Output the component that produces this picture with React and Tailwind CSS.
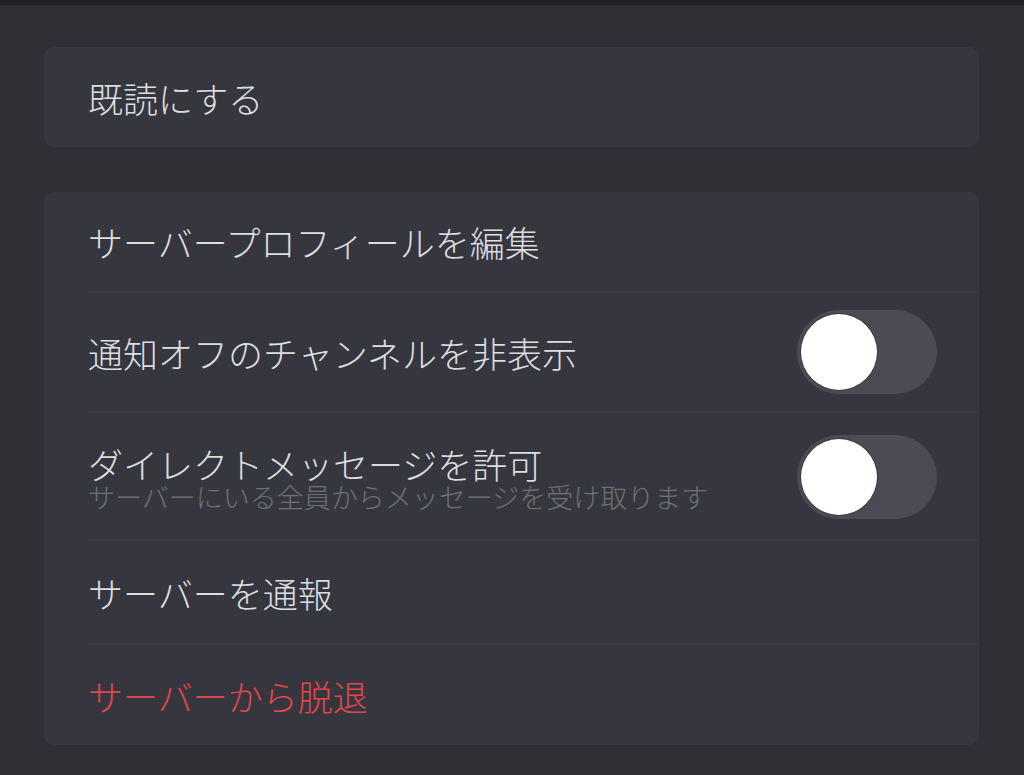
const FONT = { fontFamily: '"Noto Sans CJK JP", "Noto Sans", sans-serif' };

function Toggle() {
  return (
    <div className="w-[140px] h-[84px] rounded-full bg-[#4b4c53] flex items-center px-[4px] shrink-0">
      <div className="w-[76px] h-[76px] rounded-full bg-white shadow-[0_0_0_1px_rgba(0,0,0,0.2)]" />
    </div>
  );
}

function Row({ height, last, children }) {
  return (
    <div className="pl-[44px]">
      <div
        className={`flex items-center justify-between pr-[42px] ${height} ${
          last ? "" : "border-b border-[#3e4047]"
        }`}
      >
        {children}
      </div>
    </div>
  );
}

export default function App() {
  return (
    <div className="min-h-[775px] bg-[#2f3035] text-[#dcdde0] font-light" style={FONT}>
      <div className="h-[5px] bg-[#1f2023]" />

      <div className="pl-[44px] pr-[45px] pt-[42px] pb-[30px] flex flex-col gap-[45px]">
        {/* read */}
        <div className="h-[100px] rounded-[10px] bg-[#36373e] flex items-center pl-[44px]">
          <span className="text-[35px] leading-none">既読にする</span>
        </div>

        {/* settings */}
        <div className="rounded-[10px] bg-[#36373e]">
          <Row height="h-[100px]">
            <span className="text-[35px] leading-none">サーバープロフィールを編集</span>
          </Row>
          <Row height="h-[121px]">
            <span className="text-[35px] leading-none">通知オフのチャンネルを非表示</span>
            <Toggle />
          </Row>
          <Row height="h-[128px]">
            <div className="flex flex-col pt-[4px]">
              <span className="text-[35px] leading-[36px]">ダイレクトメッセージを許可</span>
              <span className="text-[27px] leading-[30px] text-[#6e7077]">
                サーバーにいる全員からメッセージを受け取ります
              </span>
            </div>
            <Toggle />
          </Row>
          <Row height="h-[104px]">
            <span className="text-[35px] leading-none">サーバーを通報</span>
          </Row>
          <Row height="h-[100px]" last>
            <span className="text-[35px] leading-none text-[#e0464b]">サーバーから脱退</span>
          </Row>
        </div>
      </div>
    </div>
  );
}
